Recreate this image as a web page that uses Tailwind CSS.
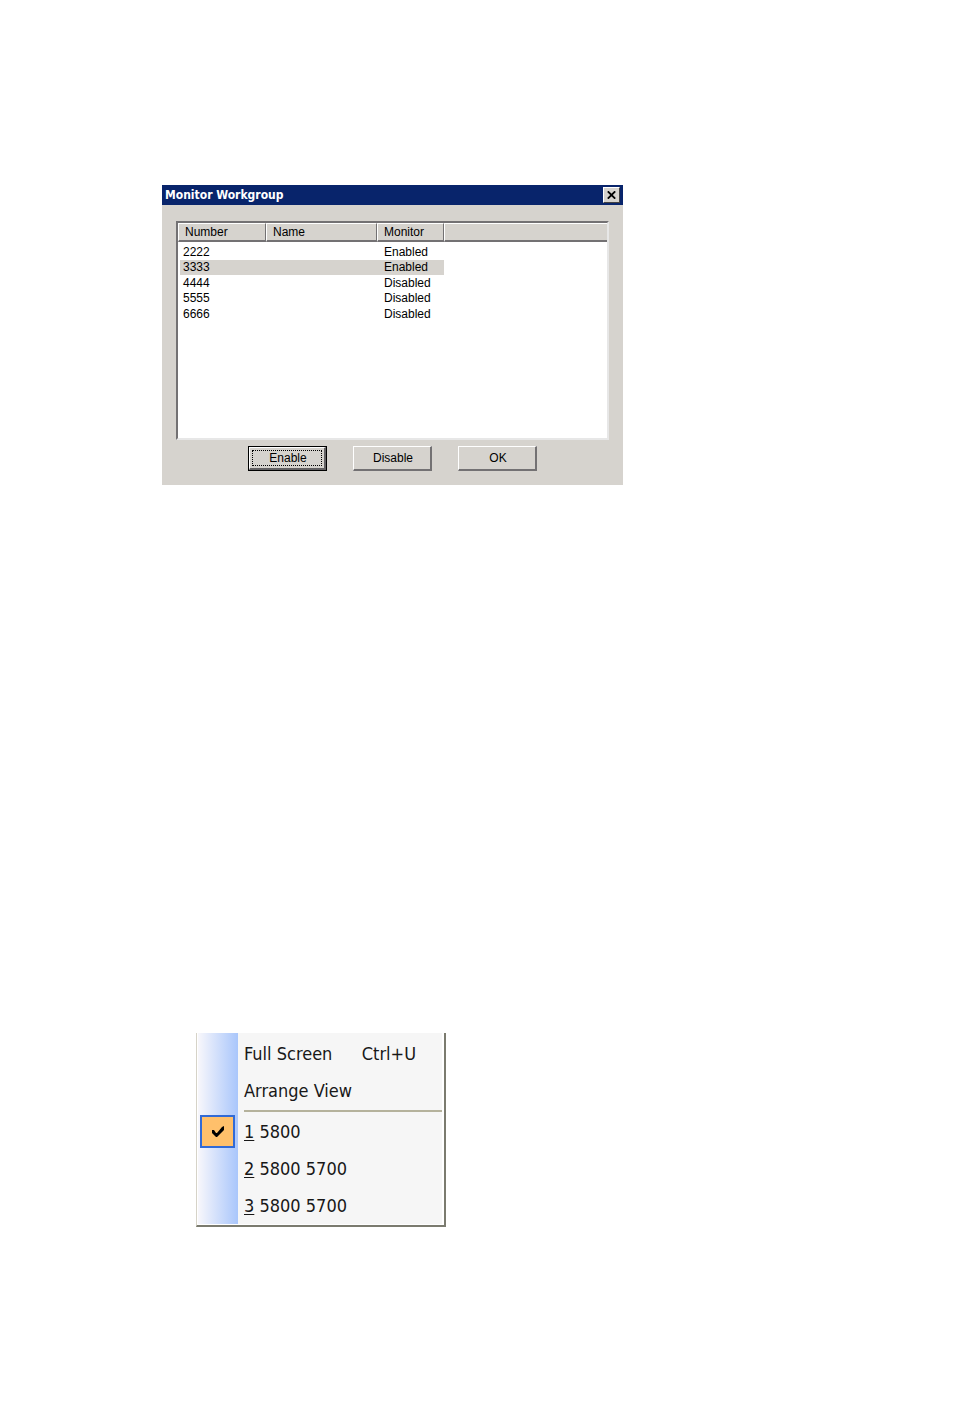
<!DOCTYPE html>
<html lang="en">
<head>
    <meta charset="UTF-8">
    <meta name="viewport" content="width=device-width, initial-scale=1.0">
    <title>Monitor Workgroup</title>
    <script src="https://cdn.jsdelivr.net/npm/@tailwindcss/browser@4"></script>
</head>
<body class="bg-white text-black">
    <main class="flex flex-col gap-[548px] pt-[185px] pb-44 pl-[162px]">

        <!-- Monitor Workgroup dialog -->
        <section role="dialog" aria-labelledby="dialog-title" class="w-full max-w-[461px] bg-[#d6d3ce] font-['Liberation_Sans',sans-serif] text-xs">
            <header class="flex h-5 items-center justify-between bg-[#08246b] pr-[3px] pl-[3px]">
                <h1 id="dialog-title" class="font-['DejaVu_Sans_Condensed','DejaVu_Sans',sans-serif] text-xs font-bold text-white">Monitor Workgroup</h1>
                <button type="button" aria-label="Close" class="flex h-4 w-[17px] items-center justify-center border border-t-white border-r-[#424142] border-b-[#424142] border-l-white bg-[#d6d3ce]">
                    <svg class="h-2 w-[9px]" viewBox="0 0 9 8" fill="none" stroke="#000" stroke-width="1.8"><path d="M0.8 0.3 8.2 7.7M8.2 0.3 0.8 7.7"/></svg>
                </button>
            </header>

            <div class="px-[14px] pt-4 pb-[14px]">
                <div class="h-[219px] border-2 border-t-[#737173] border-r-[#e7e7e7] border-b-[#e7e7e7] border-l-[#737173] bg-white">
                    <table class="w-full table-fixed border-separate border-spacing-0 text-left leading-[15px]">
                        <colgroup>
                            <col class="w-[88px]">
                            <col class="w-[111px]">
                            <col class="w-[67px]">
                            <col>
                        </colgroup>
                        <thead class="bg-[#d6d3ce]">
                            <tr class="h-[19px]">
                                <th class="border-t border-r border-b-2 border-l border-t-white border-r-[#737173] border-b-[#737173] border-l-white p-0 pt-px pl-1.5 font-normal">Number</th>
                                <th class="border-t border-r border-b-2 border-l border-t-white border-r-[#737173] border-b-[#737173] border-l-white p-0 pt-px pl-1.5 font-normal">Name</th>
                                <th class="border-t border-r border-b-2 border-l border-t-white border-r-[#737173] border-b-[#737173] border-l-white p-0 pt-px pl-1.5 font-normal">Monitor</th>
                                <td class="border-t border-b-2 border-l border-t-white border-b-[#737173] border-l-white p-0"></td>
                            </tr>
                            <tr class="h-0.5 bg-white"><td colspan="4" class="p-0"></td></tr>
                        </thead>
                        <tbody>
                            <tr class="odd:h-4 even:h-[15px]"><td class="p-0 pl-[5px]">2222</td><td class="p-0"></td><td class="p-0 pl-[7px]">Enabled</td><td class="p-0"></td></tr>
                            <tr class="odd:h-4 even:h-[15px]"><td class="border-l-2 border-white bg-[#d6d3ce] p-0 pl-[3px]">3333</td><td class="bg-[#d6d3ce] p-0"></td><td class="bg-[#d6d3ce] p-0 pl-[7px]">Enabled</td><td class="p-0"></td></tr>
                            <tr class="odd:h-4 even:h-[15px]"><td class="p-0 pl-[5px]">4444</td><td class="p-0"></td><td class="p-0 pl-[7px]">Disabled</td><td class="p-0"></td></tr>
                            <tr class="odd:h-4 even:h-[15px]"><td class="p-0 pl-[5px]">5555</td><td class="p-0"></td><td class="p-0 pl-[7px]">Disabled</td><td class="p-0"></td></tr>
                            <tr class="odd:h-4 even:h-[15px]"><td class="p-0 pl-[5px]">6666</td><td class="p-0"></td><td class="p-0 pl-[7px]">Disabled</td><td class="p-0"></td></tr>
                        </tbody>
                    </table>
                </div>

                <div class="mt-1.5 flex justify-center gap-[26px]">
                    <!-- default button: black frame plus focus rectangle -->
                    <button type="button" class="h-[25px] w-[79px] border border-black bg-[#d6d3ce]">
                        <span class="flex h-full border-t border-r-2 border-b-2 border-l border-t-white border-r-[#636163] border-b-[#636163] border-l-white p-0.5">
                            <span class="flex flex-1 items-center justify-center border border-dotted border-black pl-0.5">Enable</span>
                        </span>
                    </button>
                    <button type="button" class="h-[25px] w-[79px] border-t border-r-2 border-b-2 border-l border-t-white border-r-[#737173] border-b-[#737173] border-l-white bg-[#d6d3ce] pl-0.5">Disable</button>
                    <button type="button" class="h-[25px] w-[79px] border-t border-r-2 border-b-2 border-l border-t-white border-r-[#737173] border-b-[#737173] border-l-white bg-[#d6d3ce] pl-0.5">OK</button>
                </div>
            </div>
        </section>

        <!-- View menu -->
        <div role="menu" class="ml-[34px] w-full max-w-[250px] border-r-2 border-b-2 border-l border-r-[#7b7b6f] border-b-[#7b7b6f] border-l-[#d6d3c8] bg-white pr-0.5 pb-px pl-px font-['DejaVu_Sans_Condensed','DejaVu_Sans',sans-serif] text-lg text-[#181818]">
            <div class="bg-[linear-gradient(to_right,#f8f7fb_0,#a9c6fb_40px,#f6f6f6_40px)] pt-0.5">
                <button type="button" role="menuitem" class="flex h-[37px] w-full items-center pr-[26px] pl-[46px]">
                    <span class="flex-1 text-left">Full Screen</span>
                    <span>Ctrl+U</span>
                </button>
                <button type="button" role="menuitem" class="flex h-[37px] w-full items-center pl-[46px]">Arrange View</button>
                <div role="separator" class="my-px ml-[46px] h-0.5 bg-[#b5b29c]"></div>
                <button type="button" role="menuitemradio" aria-checked="true" class="flex h-[37px] w-full items-center gap-[9px] pl-0.5">
                    <span class="flex h-[33px] w-[35px] items-center justify-center border-2 border-[#316ad6] bg-[#ffc06b]">
                        <svg class="h-3 w-3.5" viewBox="0 0 14 12" fill="#000"><path d="M1 4h2l2 3h1L11 1l2-1v4L6 11H5L1 7z"/></svg>
                    </span>
                    <span><u class="underline-offset-2">1</u> 5800</span>
                </button>
                <button type="button" role="menuitemradio" aria-checked="false" class="flex h-[37px] w-full items-center pl-[46px]"><span><u class="underline-offset-2">2</u> 5800 5700</span></button>
                <button type="button" role="menuitemradio" aria-checked="false" class="flex h-[37px] w-full items-center pl-[46px]"><span><u class="underline-offset-2">3</u> 5800 5700</span></button>
            </div>
        </div>
    </main>
</body>
</html>
